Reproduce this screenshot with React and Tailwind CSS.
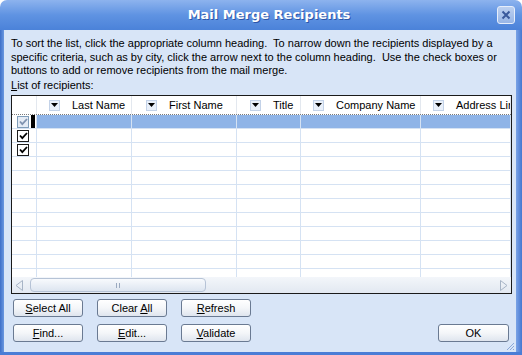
import React from 'react';

const font = { fontFamily: '"Liberation Sans", Arial, sans-serif' };

const columns = [
  { key: 'last', label: 'Last Name', width: 'w-[95px]', arrow: 'ml-[12px]' },
  { key: 'first', label: 'First Name', width: 'w-[105px]', arrow: 'ml-[14px]' },
  { key: 'title', label: 'Title', width: 'w-[64px]', arrow: 'ml-[13px]' },
  { key: 'company', label: 'Company Name', width: 'w-[120px]', arrow: 'ml-[12px]' },
  { key: 'address', label: 'Address Lin', width: 'w-[90px]', arrow: 'ml-[12px]' },
];

const rows = Array.from({ length: 12 }, (_, i) => i);

const DropArrow = ({ className }) => (
  <span
    className={`flex h-[11px] w-[11px] shrink-0 items-center justify-center border border-[#c3d2e8] bg-[#e9f0fa] ${className}`}
  >
    <svg width="7" height="4" viewBox="0 0 7 4">
      <path d="M0 0h7L3.5 4z" fill="#000" />
    </svg>
  </span>
);

const Check = ({ dim }) => (
  <span
    className={`flex h-[12px] w-[12px] items-center justify-center border ${
      dim ? 'border-[#7f9db9] bg-[#e4ebf5]' : 'border-[#1c1c1c] bg-white'
    }`}
  >
    <svg width="9" height="8" viewBox="0 0 9 8">
      <path d="M1 3.5l2.3 2.6L8 1" fill="none" stroke={dim ? '#7f93b0' : '#000'} strokeWidth="1.8" />
    </svg>
  </span>
);

const Btn = ({ children, className = '' }) => (
  <button
    type="button"
    className={`flex h-[18px] w-[70px] items-center justify-center rounded-[3px] border border-[#6a7a92] bg-gradient-to-b from-white via-[#f4f6f9] to-[#dfe5ee] text-[11px] text-black ${className}`}
    style={font}
  >
    <span className="whitespace-pre">{children}</span>
  </button>
);

const U = ({ children }) => <span className="underline underline-offset-1">{children}</span>;

export default function App() {
  return (
    <div className="h-[355px] w-[522px] overflow-hidden bg-white" style={font}>
      <div className="flex h-full flex-col">
        {/* title bar */}
        <div className="relative flex h-[30px] shrink-0 items-center justify-center rounded-t-[7px] bg-gradient-to-b from-[#8db3ee] via-[#5f93e2] to-[#4b82d9]">
          <span
            className="pl-[16px] text-[13px] font-bold text-white [text-shadow:1px_1px_0_#2b55a8]"
            style={{ fontFamily: '"DejaVu Sans", sans-serif' }}
          >
            Mail Merge Recipients
          </span>
          <span className="absolute right-[7px] top-[6px] flex h-[18px] w-[18px] items-center justify-center rounded-[3px] border border-[#e6eefb] bg-gradient-to-b from-[#bcd0f0] to-[#97b5e6]">
            <svg width="10" height="10" viewBox="0 0 10 10">
              <path d="M1.5 1.5l7 7M8.5 1.5l-7 7" stroke="#3a5a9c" strokeWidth="2" />
            </svg>
          </span>
        </div>

        {/* body with borders */}
        <div className="flex min-h-0 flex-1 bg-[#4f83d9]">
          <div className="w-[4px] shrink-0 bg-gradient-to-r from-[#3d6fc8] to-[#6a98e0]" />
          <div className="relative flex min-w-0 flex-1 flex-col bg-[#d8e5f7] pl-[7px] pr-[5px]">
            <div className="whitespace-nowrap pt-[7px] text-[11px] leading-[13.5px] text-black">
              <div>To sort the list, click the appropriate column heading.&nbsp; To narrow down the recipients displayed by a</div>
              <div>specific criteria, such as by city, click the arrow next to the column heading.&nbsp; Use the check boxes or</div>
              <div>buttons to add or remove recipients from the mail merge.</div>
              <div className="mt-[1px]">
                <U>L</U>ist of recipients:
              </div>
            </div>

            {/* list */}
            <div className="mt-[3px] flex h-[199px] w-[501px] flex-col border border-[#1a1a1a] bg-white">
              <div className="flex h-[19px] shrink-0 border-b border-dotted border-[#7a7a7a] text-[11px] leading-[18px]">
                <div className="w-[25px] shrink-0 border-r border-[#e3e8ef]" />
                {columns.map((c) => (
                  <div
                    key={c.key}
                    className={`flex ${c.width} shrink-0 items-center overflow-hidden whitespace-nowrap border-r border-[#e3e8ef]`}
                  >
                    <DropArrow className={c.arrow} />
                    <span className="ml-[12px]">{c.label}</span>
                  </div>
                ))}
              </div>
              <div className="min-h-0 flex-1 overflow-hidden">
                {rows.map((r) => (
                  <div key={r} className="flex h-[14px] border-b border-[#d5e2f3]">
                    <div className="flex w-[25px] shrink-0 items-center border-r border-[#d5e2f3] bg-white pl-[5px]">
                      {r < 3 && <Check dim={r === 0} />}
                      {r === 0 && <span className="ml-[2px] h-[13px] w-[4px] bg-black" />}
                    </div>
                    {columns.map((c) => (
                      <div
                        key={c.key}
                        className={`${c.width} shrink-0 border-r border-[#d5e2f3] ${r === 0 ? 'bg-[#8fb4e7]' : ''}`}
                      />
                    ))}
                  </div>
                ))}
              </div>
              {/* horizontal scrollbar */}
              <div className="flex h-[16px] shrink-0 items-center bg-gradient-to-b from-[#f3f6fa] to-[#e2e8f1] px-[3px]">
                <svg width="9" height="11" viewBox="0 0 9 11" className="shrink-0">
                  <path d="M7.5 0.5v10L1 5.5z" fill="none" stroke="#a7b4c6" />
                </svg>
                <div className="ml-[6px] flex h-[14px] w-[176px] items-center justify-center rounded-[4px] border border-[#b6c3d6] bg-gradient-to-b from-[#f8fafd] to-[#dde5f0]">
                  <span className="h-[5px] w-[1px] bg-[#9aa9bf]" />
                  <span className="ml-[2px] h-[5px] w-[1px] bg-[#9aa9bf]" />
                </div>
                <div className="flex-1" />
                <svg width="9" height="11" viewBox="0 0 9 11" className="shrink-0">
                  <path d="M1.5 0.5v10L8 5.5z" fill="none" stroke="#a7b4c6" />
                </svg>
              </div>
            </div>

            {/* buttons */}
            <div className="mt-[5px] flex gap-[14px] pl-[2px]">
              <Btn>
                <U>S</U>elect All
              </Btn>
              <Btn>
                {'Clear '}
                <U>A</U>ll
              </Btn>
              <Btn>
                <U>R</U>efresh
              </Btn>
            </div>
            <div className="mt-[7px] flex items-center gap-[14px] pl-[2px]">
              <Btn>
                <U>F</U>ind...
              </Btn>
              <Btn>
                <U>E</U>dit...
              </Btn>
              <Btn>
                <U>V</U>alidate
              </Btn>
              <div className="flex-1" />
              <Btn className="mr-[2px] w-[71px]">OK</Btn>
            </div>

            <svg width="9" height="9" viewBox="0 0 9 9" className="absolute bottom-[1px] right-[1px]">
              <path d="M8 1L1 8M8 4L4 8M8 7L7 8" stroke="#8aa8d8" strokeWidth="1" />
            </svg>
          </div>
          <div className="w-[6px] shrink-0 bg-gradient-to-r from-[#7aa3e6] to-[#4677d0]" />
        </div>
        <div className="h-[3px] shrink-0 bg-[#4a7dd6]" />
      </div>
    </div>
  );
}
